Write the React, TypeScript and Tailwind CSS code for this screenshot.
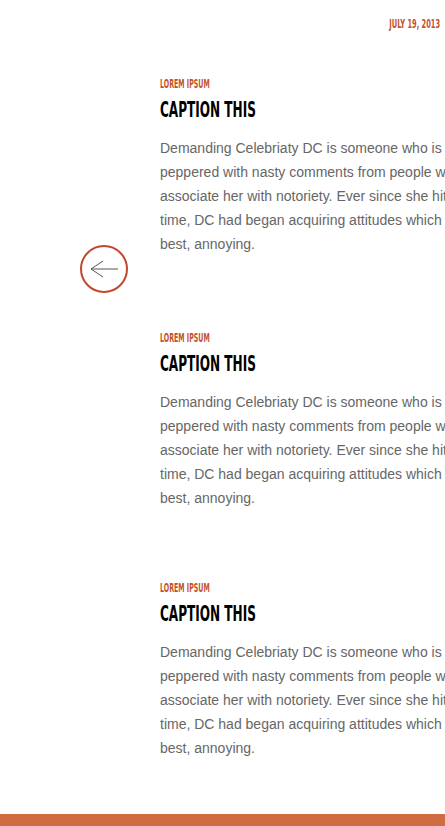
import React from "react";

const lines = [
  "Demanding Celebriaty DC is someone who is constantly",
  "peppered with nasty comments from people who often",
  "associate her with notoriety. Ever since she hit prime",
  "time, DC had began acquiring attitudes which are, at",
  "best, annoying.",
];

const narrow = { fontFamily: '"Liberation Sans Narrow", "DejaVu Sans Condensed", sans-serif' };

const Post: React.FC = () => {
  return (
    <div className="pl-[160px]">
      <p
        style={narrow}
        className="text-[13px] leading-[14px] font-bold text-[#c4512d] uppercase origin-left scale-x-[0.54] whitespace-nowrap"
      >
        Lorem Ipsum
      </p>
      <h2
        style={narrow}
        className="mt-[7px] text-[22px] leading-[24px] font-bold text-black uppercase origin-left scale-x-[0.61] whitespace-nowrap"
      >
        Caption This
      </h2>
      <div
        className="mt-[14px] text-[14px] leading-[24px] text-[#666666]"
        style={{ fontFamily: '"Liberation Sans", Arial, sans-serif' }}
      >
        {lines.map((l, i) => (
          <div key={i} className="whitespace-nowrap">
            {l}
          </div>
        ))}
      </div>
    </div>
  );
};

export default function App() {
  return (
    <div className="w-[445px] h-[826px] overflow-hidden bg-white flex flex-col">
      <div className="flex justify-end pt-[17px] pr-[5px]">
        <span
          style={narrow}
          className="text-[13px] leading-[14px] font-bold text-[#c4512d] origin-right scale-x-[0.57] whitespace-nowrap"
        >
          JULY 19, 2013
        </span>
      </div>
      <div className="mt-[46px]">
        <Post />
      </div>
      <div className="pl-[80px] mt-[-11px]">
        <button className="w-[48px] h-[48px] rounded-full border-2 border-[#c0482d] flex items-center justify-center">
          <svg width="28" height="18" viewBox="0 0 28 18" fill="none">
            <path d="M28 9H1M13 1L1 9L13 17" stroke="#555" strokeWidth="1" />
          </svg>
        </button>
      </div>
      <div className="mt-[38px]">
        <Post />
      </div>
      <div className="mt-[71px]">
        <Post />
      </div>
      <div className="mt-auto h-[12px] bg-[#d06c42]" />
    </div>
  );
}
